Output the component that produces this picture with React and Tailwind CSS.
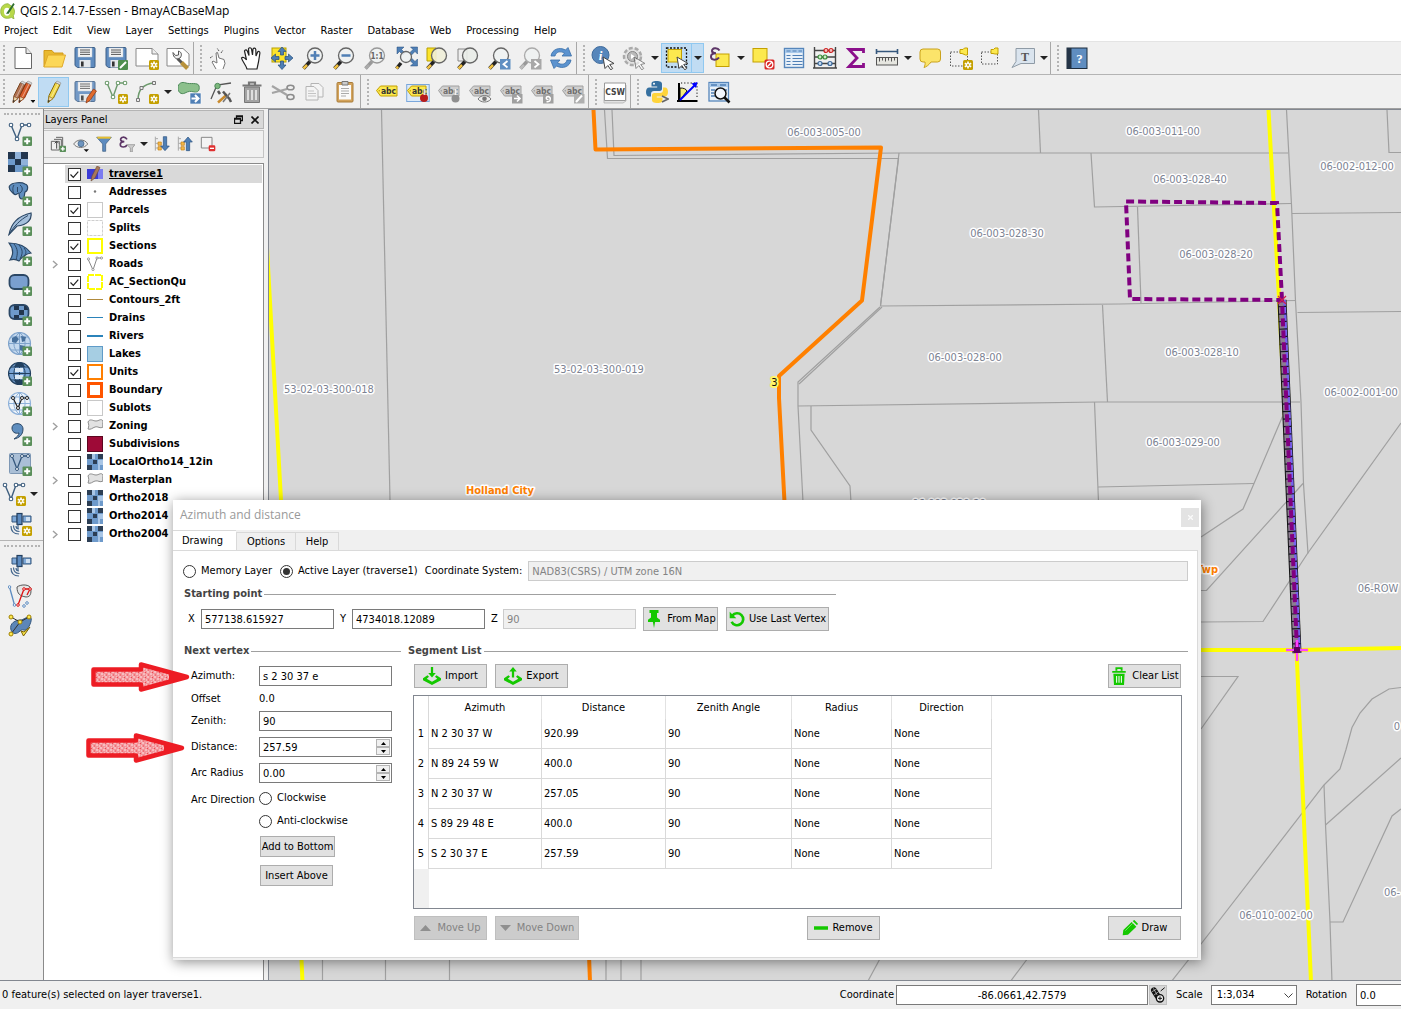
import React from "react";

/* ---------- icon primitives ---------- */

const Ico = ({ s = 24, children }) => (
  <svg width={s} height={s} viewBox="0 0 24 24" fill="none" className="shrink-0" aria-hidden="true">
    {children}
  </svg>
);

const Plus = () => (
  <g>
    <rect x="14.5" y="14.5" width="9.5" height="9.5" rx="1" fill="#5a8f5a" />
    <path d="M19.2 16.2v6M16.2 19.2h6" stroke="#fff" strokeWidth="2" />
  </g>
);
const Star = () => (
  <g>
    <rect x="14" y="14" width="10" height="10" rx="1.5" fill="#c4a000" />
    <path d="M19 15.5v7M15.8 17.2l6.4 3.6M15.8 20.8l6.4-3.6" stroke="#fff" strokeWidth="1.7" />
    <circle cx="19" cy="19" r="1" fill="#c4a000" />
  </g>
);
const Cursor = ({ o = 1 }) => (
  <path d="M12 11l11 6.5-4.3 1 3 4-2 1.3-2.800-4.300-2.900 3z" fill="#fff" stroke="#444" strokeWidth="1" opacity={o} />
);
const Lens = ({ cx = 14, cy = 9.500, r = 7.500, fill = "#eef2f2", handle = "#f0c040", stroke = "#666", children }) => (
  <g>
    <path d={`M${cx - 5} ${cy + 6}L2.500 22.500`} stroke={handle === "#f0c040" ? "#222" : "#999"} strokeWidth="3.500" />
    <path d={`M${cx - 8} ${cy + 9.500}L2.500 22.500`} stroke={handle} strokeWidth="2.500" />
    <circle cx={cx} cy={cy} r={r} fill={fill} fillOpacity=".9" stroke={stroke} strokeWidth="1.300" />
    {children}
  </g>
);
const Floppy = () => (
  <g>
    <path d="M3 1.500h18a1 1 0 011 1v18a1 1 0 01-1 1H4.500L2 19.500v-17a1 1 0 011-1z" fill="#5e8bbf" stroke="#3d5f87" />
    <rect x="5" y="2" width="14" height="9" fill="#f4f4f4" stroke="#c4ccd6" strokeWidth=".5" />
    <path d="M7 4h10M7 6.200h10M7 8.400h10" stroke="#555" />
    <rect x="6.500" y="14" width="11" height="7.500" fill="#e4e7ea" />
    <rect x="8" y="15.500" width="2.600" height="5" fill="#333" />
  </g>
);
const Tag = ({ c = "#fce94f", b = "#c4a000", t = "#333", w = 21 }) => (
  <g>
    <path d={`M1.500 10.500L5.500 6H${w + 1}v10H5.500z`} fill={c} stroke={b} strokeLinejoin="round" />
    <circle cx="4.300" cy="10.800" r=".8" fill={b} />
    <text x="13.500" y="14" fontSize="8.500" fontWeight="bold" textAnchor="middle" fill={t} fontFamily="DejaVu Sans Condensed, sans-serif">abc</text>
  </g>
);
const GTag = () => <Tag c="#cfcfcf" b="#a0a0a0" t="#6e6e6e" />;
const PencilShape = ({ c = "#f0d848", d = "#8a6d10", x = 0 }) => (
  <g transform={`translate(${x} 0)`}>
    <path d="M5 22.500l1-7L12.500 2.500 17 4.700 10.500 18z" fill={c} stroke={d} />
    <path d="M12.500 2.500L14 1l4 2-1 1.700z" fill="#ddd" stroke="#888" strokeWidth=".6" />
    <path d="M5 22.500l1-6 4 2z" fill="#ead7ae" stroke={d} strokeWidth=".6" />
    <path d="M5 22.500l.4-2.500 1.600.8z" fill="#222" />
    <path d="M8.500 17L15 4" stroke="#fff" strokeOpacity=".45" />
  </g>
);
const Vee = ({ c = "#3f5f7f", w = 1.400 }) => (
  <g stroke={c} strokeWidth={w}>
    <path d="M3 3l6 14 5-14h7" />
    <g fill="#fff" strokeWidth="1.100">
      <circle cx="3" cy="3" r="1.800" /><circle cx="9" cy="17" r="1.800" /><circle cx="14" cy="3" r="1.800" /><circle cx="21" cy="3" r="1.800" />
    </g>
  </g>
);
const Raster = () => (
  <g>
    <rect x="0" y="0" width="20" height="20" fill="#6e9acb" />
    <path d="M0 0h7v7H0zM13 0h7v7h-7zM7 7h6v6H7zM0 13h7v7H0z" fill="#22364e" />
    <path d="M7 0h6v7H7zM13 7h7v6h-7z" fill="#8fb2da" />
  </g>
);
const Satellite = ({ children }) => (
  <g>
    <path d="M4 4h5v6H4zM15 4h8v6h-8z" fill="#7fa9d8" stroke="#35577c" />
    <rect x="18" y="5" width="4" height="4" fill="#cfe0f2" />
    <rect x="9" y="1.500" width="5" height="11" fill="#5c8bc0" stroke="#233f5f" strokeWidth="1.200" />
    <path d="M10 12.500v4M3 14c0 5 3 8 8 8M5.500 13.500c0 4 2 6 6 6M8 14c0 2 1 3 3 3" stroke="#45688e" strokeWidth="1.200" />
    {children}
  </g>
);
const Globe = ({ fill, line, children }) => (
  <g>
    <circle cx="11.500" cy="11.500" r="11" fill={fill} stroke={line} strokeWidth="1.200" />
    <path d="M.5 11.500h22M11.500.5v22M3 5h17M3 18h17M11.500.5c-7.500 6-7.500 16 0 22M11.500.5c7.500 6 7.500 16 0 22" stroke={line} />
    {children}
  </g>
);

/* ---------- toolbars ---------- */

const Caret = () => (
  <svg width="8" height="4" viewBox="0 0 8 4" aria-hidden="true"><path d="M0 0h8L4 4z" fill="#222" /></svg>
);
const Btn = ({ label, on, children }) => (
  <button
    aria-label={label}
    className={`flex h-[30px] w-[31px] items-center justify-center ${on ? "border border-[#90c8f0] bg-[#c0dcf3]" : ""}`}
  >
    <Ico>{children}</Ico>
  </button>
);
const Drop = ({ label, on }) => (
  <button
    aria-label={label}
    className={`flex h-[30px] w-3 items-center justify-center ${on ? "border border-l-0 border-[#90c8f0] bg-[#c0dcf3]" : ""}`}
  >
    <Caret />
  </button>
);
const Grip = ({ first }) => (
  <span className={`flex h-[26px] w-[7px] justify-center ${first ? "" : "ml-[3px]"}`}>
    <span className="h-full border-l-2 border-dotted border-[#b4b4b4]" />
  </span>
);
const Group = ({ first, last, label, children }) => (
  <div role="toolbar" aria-label={label} className={`flex h-full items-center ${last ? "" : "border-r border-[#a8a8a8]"}`}>
    <Grip first={first} />
    {children}
  </div>
);

const FileTools = () => (
  <Group first label="File">
    <Btn label="New project"><path d="M4 1.500h11l5.500 6v15H4z" fill="#fff" stroke="#666" /><path d="M15 1.500v6h5.500" fill="#e8e8e8" stroke="#666" /></Btn>
    <Btn label="Open project"><path d="M2 21V4.500h8l2 2.500h9v4" fill="#e9b92f" stroke="#d29a1a" /><path d="M2 21L6 9h17.500L20 21z" fill="#fcd757" stroke="#e0a92a" /></Btn>
    <Btn label="Save project"><Floppy /></Btn>
    <Btn label="Save project as"><Floppy /><rect x="14" y="14" width="10" height="10" rx="1" fill="#4f8f4f" /><path d="M16 22l6-6" stroke="#fff" strokeWidth="2" /></Btn>
    <Btn label="New composer"><path d="M1 2.500h16l6 5.500v12H1z" fill="#fff" stroke="#888" /><path d="M17 2.500V8h6" fill="#eee" stroke="#888" /><Star /></Btn>
    <Btn label="Composer manager"><path d="M1 2.500h16l6 5.500v12H1z" fill="#fff" stroke="#888" /><path d="M11.500 12.500L16 17" stroke="#555" strokeWidth="3" /><path d="M7 6.500l2.500 3 3-.5V5c3 1 4 4 1.500 7-3 2-7 0-7-5.500z" fill="#eee" stroke="#555" /><path d="M15.500 16.500l6 6" stroke="#b8923c" strokeWidth="4" /></Btn>
  </Group>
);

const NavTools = () => (
  <Group label="Map navigation">
    <Btn label="Touch zoom and pan"><path d="M8 23l-4-7 1-1 4 2-1-10 1.500-.5L11 12l5 1.500 1 4-2 5.500" fill="#fff" stroke="#777" /><path d="M11 5L9 2M2 12l3-2M13 7l2-3" stroke="#555" strokeDasharray="2 1" /></Btn>
    <Btn label="Pan map"><path d="M8 23C7 19 3 15 2.500 12c1-1.500 3-.5 5 2L5.500 5c.5-1.500 2-1.500 2.800 0L10 9.500 9.500 2.800c.7-1.600 2.500-1.300 3 .2L13.500 9 14 3c.8-1.300 2.500-1 2.800.5L17 10l1.600-4c1-1 2.300-.5 2.300 1L19.500 16 18 23z" fill="#fff" stroke="#222" strokeWidth="1.200" /></Btn>
    <Btn label="Pan to selection"><rect x="2" y="2" width="14" height="14" fill="#fce42c" stroke="#b8a000" /><g fill="#4f7fb5" stroke="#274f7c" strokeWidth=".7"><path d="M12 1l4 4.500h-2.500V9h-3V5.500H8zM12 23.500L8 19h2.500v-4h3v4H16zM1 12l4.500-4v2.500H9v3H5.500V16zM23 12l-4.500-4v2.500H15v3h3.500V16z" /></g></Btn>
    <Btn label="Zoom in"><Lens><path d="M14 5v9M9.500 9.500h9" stroke="#4f7fb5" strokeWidth="2.500" /></Lens></Btn>
    <Btn label="Zoom out"><Lens><path d="M9.500 9.500h9" stroke="#4f7fb5" strokeWidth="2.500" /></Lens></Btn>
    <Btn label="Zoom to native resolution"><Lens handle="#aaa" stroke="#999"><text x="14" y="12.500" fontSize="8" fontWeight="bold" textAnchor="middle" fill="#666" fontFamily="DejaVu Sans Condensed, sans-serif">1:1</text></Lens></Btn>
    <Btn label="Zoom full"><g fill="#4f7fb5" stroke="#274f7c" strokeWidth=".5"><path d="M3 1h7L7.500 3.500 11 7 9 9 5.500 5.500 3 8zM23.500 1v7L21 5.500 17.500 9l-2-2L19 3.500 16.500 1zM23.500 20h-7l2.500-2.500-3-3 2-2 3 3 2.500-2.500z" /></g><Lens cx={12} cy={11} r={5.500} /></Btn>
    <Btn label="Zoom to selection"><path d="M2 2h9v13H2z" fill="#fce42c" stroke="#b8a000" /><Lens fill="#efeed8" /></Btn>
    <Btn label="Zoom to layer"><path d="M2 3h9v12H2z" fill="#eee" stroke="#888" /><Lens fill="#e9ece8" /></Btn>
    <Btn label="Zoom last"><Lens /><rect x="13" y="13" width="10.500" height="10.500" fill="#5f8fc2" /><path d="M20.500 15l-4 3.200 4 3.300" stroke="#fff" strokeWidth="1.800" /></Btn>
    <Btn label="Zoom next"><Lens handle="#bbb" stroke="#aaa" /><rect x="13" y="13" width="10.500" height="10.500" fill="#a8a8a8" /><path d="M16.500 15l4 3.200-4 3.300" stroke="#fff" strokeWidth="1.800" /></Btn>
    <Btn label="Refresh"><path d="M2 10C3 3.500 10 .5 16.500 4L19 1.500 22.500 10H13l2.500-2.800C11 4.500 7 6 6 10z" fill="#5c93cf" stroke="#3a6ea8" strokeWidth=".8" /><path d="M22 14c-1 6.500-8 9.500-14.500 6L5 22.500 1.500 14H11l-2.500 2.800C13 19.500 17 18 18 14z" fill="#5c93cf" stroke="#3a6ea8" strokeWidth=".8" /></Btn>
  </Group>
);

const AttrTools = () => (
  <Group label="Attributes">
    <Btn label="Identify features"><circle cx="9.500" cy="9" r="8.500" fill="#5686bb" stroke="#3f6b9c" /><text x="9.500" y="13.500" fontSize="13" fontWeight="bold" fontStyle="italic" textAnchor="middle" fill="#fff" fontFamily="Liberation Serif, serif">i</text><Cursor /></Btn>
    <Btn label="Run feature action"><circle cx="10.500" cy="10.500" r="8.500" fill="#e2e2e2" stroke="#aaa" strokeWidth="2.500" strokeDasharray="4 2" /><circle cx="10.500" cy="10.500" r="5" fill="#bbb" stroke="#888" /><path d="M9 8v5l4-2.500z" fill="#fff" /><Cursor o={0.6} /></Btn>
    <Drop label="Feature action options" />
    <Btn label="Select features" on><rect x="1.500" y="2" width="20" height="19" stroke="#111" strokeDasharray="2 1.500" strokeWidth="1.300" /><rect x="3" y="3.500" width="13.500" height="12.500" fill="#fce94f" stroke="#c4a000" /><Cursor /></Btn>
    <Drop label="Selection options" on />
    <Btn label="Select by expression"><rect x="8" y="8" width="13" height="12.500" fill="#fce94f" stroke="#c4a000" /><path d="M11.500 4.500C9.500 1 3.500 2 4 5c.2 1.500 2 2.300 4 2.300-3 0-5.300 1-5 3.700.3 3.500 6 3.500 8 .5" stroke="#5c3566" strokeWidth="2" /></Btn>
    <Drop label="Expression options" />
    <Btn label="Deselect features"><rect x="2" y="2.500" width="14" height="13.500" fill="#fce94f" stroke="#c4a000" /><rect x="13.500" y="13.500" width="10" height="10" rx="1.500" fill="#d92626" /><circle cx="18.500" cy="18.500" r="3.300" stroke="#fff" strokeWidth="1.300" /><path d="M16.300 20.800l4.500-4.500" stroke="#fff" strokeWidth="1.300" /></Btn>
    <Btn label="Open attribute table"><rect x="2.500" y="2.500" width="19" height="19" fill="#e9f1f9" stroke="#5686bb" strokeWidth="1.400" /><path d="M3 3h18v4H3z" fill="#a9c9ea" /><path d="M4.500 5h4M10.500 5h4M16.500 5h3.500M4.500 9.500h4M10.500 9.500h10M4.500 12.500h4M10.500 12.500h10M4.500 15.500h4M10.500 15.500h10M4.500 18.500h4M10.500 18.500h10" stroke="#4f7fb5" /></Btn>
    <Btn label="Field calculator"><path d="M1.500 1v21.500M22.500 1v21.500M1.500 4.500h21M1.500 11h21M1.500 17.500h21M0 22h24" stroke="#444" strokeWidth="1.400" /><g strokeWidth="1.200"><circle cx="13" cy="4.500" r="2" fill="#f5bcbc" stroke="#c22" /><circle cx="18" cy="4.500" r="2" fill="#f5bcbc" stroke="#c22" /><circle cx="7" cy="11" r="2" fill="#cfecc8" stroke="#3a8a3a" /><circle cx="12" cy="11" r="2" fill="#cfecc8" stroke="#3a8a3a" /><circle cx="7" cy="17.500" r="2" fill="#c9def2" stroke="#3d6a9c" /><circle cx="17" cy="17.500" r="2" fill="#c9def2" stroke="#3d6a9c" /></g></Btn>
    <Btn label="Statistical summary"><path d="M19.500 7V3.500H5l8 8.500-8 8.500h14.500V17" stroke="#8b0f8b" strokeWidth="2.800" /></Btn>
    <Btn label="Measure line"><path d="M1.500 3v5M22.500 3v5M1.500 5.500h21" stroke="#35577c" strokeWidth="1.600" /><rect x="1.500" y="11.500" width="21" height="7.500" fill="#e6e6e0" stroke="#555" /><path d="M4.500 12v3.500M7.500 12v2.500M10.500 12v3.500M13.500 12v2.500M16.500 12v3.500M19.500 12v2.500" stroke="#555" /></Btn>
    <Drop label="Measure options" />
    <Btn label="Map tips"><path d="M5 3h14.500a3 3 0 013 3v7a3 3 0 01-3 3H13c-2 3-5 5-7 5.500 1-2 1.300-3.500 1-5.500H5a3 3 0 01-3-3V6a3 3 0 013-3z" fill="#fbe46a" stroke="#caa21c" /></Btn>
    <Btn label="New bookmark"><rect x="1.500" y="6" width="17" height="14" stroke="#555" strokeDasharray="1.500 1.500" /><path d="M11 3.500h3L15.500 2h3v7h-2L13 7.500h-2z" fill="#fce94f" stroke="#c4a000" /><Star /></Btn>
    <Btn label="Show bookmarks"><rect x="1.500" y="6" width="16" height="12" stroke="#555" strokeDasharray="1.500 1.500" /><path d="M11 3.500h2.500L15 2h3v6h-3L13 7.500h-2z" fill="#fce94f" stroke="#c4a000" /></Btn>
    <Btn label="Text annotation"><path d="M5 2.500h18.500v15H10L1 21.500l4-6z" fill="#dae4ee" stroke="#8f9ba6" /><text x="14" y="14.500" fontSize="12" fontWeight="bold" textAnchor="middle" fill="#555" fontFamily="Liberation Serif, serif">T</text></Btn>
    <Drop label="Annotation options" />
  </Group>
);

const HelpTools = () => (
  <Group last label="Help">
    <Btn label="Help contents"><rect x="2" y="2" width="20" height="20.500" fill="#5f8dc0" stroke="#1d2c3d" /><path d="M2 2h4.500v20.500H2z" fill="#243447" /><text x="14.500" y="17" fontSize="13" fontWeight="bold" textAnchor="middle" fill="#fff" fontFamily="Liberation Serif, serif">?</text></Btn>
  </Group>
);

const Hammer = () => (
  <g><path d="M9 22.500l9-8" stroke="#c98a2c" strokeWidth="2.500" /><path d="M14 11.500l6 7M20 18l2 4M11 14l-2-3" stroke="#555" strokeWidth="2.500" /><path d="M14 22l7-9" stroke="#777" strokeWidth="1.500" /></g>
);

const EditTools = () => (
  <Group first label="Digitizing">
    <Btn label="Current edits"><PencilShape c="#b07050" d="#7a4520" x={-3} /><PencilShape c="#d85c2a" d="#8a3510" x={3} /><path d="M19.500 20h5l-2.500 3z" fill="#111" /></Btn>
    <Btn label="Toggle editing" on><PencilShape x={1} /></Btn>
    <Btn label="Save layer edits"><g opacity=".85"><Floppy /></g><path d="M13 23l1-5 6.500-9 3 2-6.500 9.500z" fill="#e06a2c" stroke="#8a3510" strokeWidth=".7" /></Btn>
    <Btn label="Add feature"><Vee c="#6c9a6c" /><Star /></Btn>
    <Btn label="Add circular string"><path d="M3 20C3 10 8 4 19 3" stroke="#6c9a6c" strokeWidth="1.500" /><g fill="#eee" stroke="#777"><path d="M1.500 18.500h3v3h-3zM5 6.500h3v3H5zM17.500 1.500h3v3h-3z" /></g><Star /></Btn>
    <Drop label="Curve options" />
    <Btn label="Move feature"><path d="M0 8c0-5 4-6.500 8-5s12-1 13 3-1 7-5 6-5-1-9 1-7-1-7-5z" fill="#8cc08c" stroke="#4e8a5a" /><rect x="12" y="13" width="11" height="11" fill="#4f7fb5" stroke="#fff" strokeWidth=".6" /><path d="M13.500 18.500h6M17 15l3.500 3.500L17 22" stroke="#fff" strokeWidth="2" /></Btn>
    <Btn label="Node tool"><path d="M2 19L8 5l14-2" stroke="#555" strokeWidth="1.300" /><circle cx="8.500" cy="6" r="2.700" fill="#7db87d" stroke="#4e8a5a" /><Hammer /></Btn>
    <Btn label="Delete selected"><path d="M4.500 7h15v15.500h-15z" fill="#a3a3a3" stroke="#777" /><path d="M2.500 5.500h19M9 5V2.500h6V5" stroke="#777" strokeWidth="2.200" /><path d="M8 10v10M12 10v10M16 10v10" stroke="#e6e6e6" strokeWidth="1.800" /></Btn>
    <Btn label="Cut features"><path d="M1 6l15 9M1 13l15-4" stroke="#a4a4a4" strokeWidth="2.200" /><ellipse cx="19.500" cy="7.500" rx="3.500" ry="2.300" stroke="#8c8c8c" strokeWidth="1.600" /><ellipse cx="19.500" cy="17" rx="3.500" ry="2.500" stroke="#8c8c8c" strokeWidth="1.600" /></Btn>
    <Btn label="Copy features"><path d="M9 3.500h8l4 4V17H9z" fill="#f4f4f4" stroke="#b4b4b4" /><path d="M4 6.500h8l4 4V20H4z" fill="#f4f4f4" stroke="#b4b4b4" /><path d="M6 11h6M6 13.500h8M6 16h8" stroke="#c4c4c4" /></Btn>
    <Btn label="Paste features"><rect x="4" y="2.500" width="16" height="19.500" rx="1" fill="#d3a35c" stroke="#a97c38" /><path d="M6 5h12v14.500H6z" fill="#fafafa" /><path d="M9 1.500h6v3.500H9z" fill="#ccc" stroke="#777" /><path d="M8 8.500h8M8 11h8M8 13.500h8M8 16h5" stroke="#aaa" /></Btn>
  </Group>
);

const LabelTools = () => (
  <Group label="Labels">
    <Btn label="Layer labeling options"><Tag /></Btn>
    <Btn label="Highlight pinned labels"><rect x=".7" y="4.500" width="22.500" height="17" fill="#dceaf8" stroke="#7aa7dc" /><Tag w={19} /><circle cx="18" cy="18" r="4" fill="#b81c1c" /><path d="M18.500 9v6" stroke="#ddd" strokeWidth="2" /></Btn>
    <Btn label="Pin or unpin labels"><GTag /><circle cx="18.500" cy="18.500" r="4" fill="#8f8f8f" /><path d="M18.500 9v6" stroke="#f0f0f0" strokeWidth="2" /></Btn>
    <Btn label="Show or hide labels"><GTag /><path d="M10 19c3-4.500 10-4.500 13 0-3 4-10 4-13 0z" fill="#eee" stroke="#777" /><circle cx="16.500" cy="18.800" r="2.300" fill="#777" /></Btn>
    <Btn label="Move label"><GTag /><rect x="13" y="14" width="10.500" height="9.500" fill="#a0a0a0" /><path d="M15 18.500h5M18 15.500l3 3-3 3" stroke="#fff" strokeWidth="1.600" /></Btn>
    <Btn label="Rotate label"><GTag /><rect x="13" y="14" width="10.500" height="9.500" fill="#a0a0a0" /><path d="M16.500 21.500c4 1.500 5-4 2-5-3 0-3 3.500 0 3" stroke="#fff" strokeWidth="1.400" /></Btn>
    <Btn label="Change label"><GTag /><rect x="13" y="14" width="10.500" height="9.500" fill="#b0b0b0" /><path d="M15 22l6-6.500" stroke="#fff" strokeWidth="2" /></Btn>
  </Group>
);

const PluginTools = () => (
  <>
    <Group label="Metadata search">
      <Btn label="Metadata search"><path d="M4 5h19v16l-3 2H1V8z" fill="#e2e2e2" stroke="#aaa" strokeWidth=".7" /><path d="M1.500 3h21v17.500h-21z" fill="#fff" stroke="#999" /><text x="12" y="14.500" fontSize="8.500" fontWeight="bold" textAnchor="middle" fill="#444" fontFamily="DejaVu Sans Condensed, sans-serif">CSW</text></Btn>
    </Group>
    <Group last label="Plugins">
      <Btn label="Python console"><path d="M11.500 1c-4 0-5 1-5 3v2.500h5.700v1H4.500C2 7.500 1 9.500 1 12s1 4.500 3 4.500h2V14c0-2 1-3 3-3h5.500c2 0 2.500-1 2.500-2.500V4c0-2-1.500-3-5.500-3z" fill="#3670a0" /><circle cx="9" cy="3.700" r="1" fill="#fff" /><path d="M12.500 23c4 0 5-1 5-3v-2.500h-5.700v-1h7.700c2.500 0 3.500-2 3.500-4.500S22 7.500 20 7.500h-2V10c0 2-1 3-3 3H9.500c-2 0-2.500 1-2.500 2.500V20c0 2 1.500 3 5.500 3z" fill="#ffd43b" /><path d="M17 16l6 3-6 3" stroke="#666" strokeWidth="1.600" /></Btn>
      <Btn label="Azimuth and distance"><path d="M4 20V8c4 0 6 1 7 3z" fill="#f4ef7a" stroke="#111" /><path d="M3 3v19M1 21h20.500" stroke="#000" strokeWidth="2" /><path d="M5 3h16v15" stroke="#111" strokeDasharray="1.200 2" /><path d="M4 20L19 5" stroke="#00f" strokeWidth="2" /><path d="M21.500 2l-1.500 6-4.500-4.500z" fill="#00f" /></Btn>
      <Btn label="Attribute search"><rect x="2" y="2.500" width="19.500" height="18.500" fill="#e9f1f9" stroke="#5686bb" strokeWidth="1.300" /><path d="M2.500 3h18.500v4H2.500z" fill="#a9c9ea" /><path d="M4 5h6M13 5h6M4 10h4M4 13h3M4 16h4M17 10h3" stroke="#4f7fb5" strokeWidth="1.300" /><circle cx="13.500" cy="13.500" r="5.500" fill="#f4f8fc" fillOpacity=".8" stroke="#111" strokeWidth="1.500" /><path d="M17.500 17.500l5 5" stroke="#111" strokeWidth="2.600" /></Btn>
    </Group>
  </>
);

/* ---------- left tool strip ---------- */

const sideTop = [
  ["Add vector layer", <><Vee /><Plus /></>],
  ["Add raster layer", <><Raster /><Plus /></>],
  ["Add PostGIS layer", <><path d="M1.500 4C4 0 14 0 17 2c4 1 3 7 0 8-1 3 0 7-3 7s-3-3-3-6c-2 0-3 3-5 1S0 8 1.500 4z" fill="#5f8ebf" stroke="#2b4765" strokeWidth="1.200" /><path d="M6 3c-2 3-1 7 0 9M12 3c3 2 3 6 0 8M9.500 5v5" stroke="#2b4765" /><Plus /></>],
  ["Add SpatiaLite layer", <><path d="M1 22.500C3 12 9 4 23 1c1 6-3 12-14 13z" fill="#a4bfdb" stroke="#2b4765" strokeWidth="1.200" /><path d="M1 22.500C6 14 12 8 20 3.500" stroke="#2b4765" /><Plus /></>],
  ["Add MSSQL layer", <><path d="M1 1c8 0 16 2 22 10-6 1-9 4-12 8-3-2-6-2-9-1 4-6 3-12-1-17z" fill="#5f8ebf" stroke="#2b4765" strokeWidth="1.200" /><path d="M6 2c4 5 4 9 2 16M11 3c4 5 4 8 1 14M16 6c3 4 2 5 0 9" stroke="#2b4765" /><Plus /></>],
  ["Add Oracle layer", <><rect x="1.500" y="3" width="19" height="14" rx="5" fill="#7a9fd0" stroke="#2b4765" strokeWidth="1.800" /><Plus /></>],
  ["Add Oracle raster layer", <><rect x="1.500" y="3" width="19" height="14" rx="5" fill="#6e9acb" stroke="#2b4765" strokeWidth="1.800" /><path d="M6 4h5v4H6zM11 8h5v5h-5zM6 13h5v3.500H6zM16 4h2l2 3v1h-4z" fill="#22364e" /><Plus /></>],
  ["Add WMS layer", <><Globe fill="#c3d8ee" line="#7fa3cb" /><path d="M4 6l4-2 3 3-3 4-4-1zM13 4l5 1-1 4-3 1zM12 13l5 1-2 5-3-1z" fill="#47709c" /><Plus /></>],
  ["Add WCS layer", <><Globe fill="#7aa5d6" line="#22405f" /><path d="M6 5h11L15 1H8zM6 18h11l-2 4H8z" fill="#22405f" /><path d="M7 6h8v4H7zM7 13h8v4H7z" fill="#dbe8f5" /><Plus /></>],
  ["Add WFS layer", <><Globe fill="#eef4fa" line="#8fb2da" /><path d="M5 6l5 10 4-10h5" stroke="#222" strokeWidth="1.200" /><g fill="#fff" stroke="#222"><circle cx="5" cy="6" r="1.500" /><circle cx="10" cy="16" r="1.500" /><circle cx="14" cy="6" r="1.500" /><circle cx="19" cy="6" r="1.500" /></g><Plus /></>],
  ["Add delimited text layer", <><path d="M4 6c0-6 11-6 11 1 0 6-4 9-9 10 3-2 5-4 5-6-4 1-7-1-7-5z" fill="#5f8ebf" stroke="#2b4765" /><Plus /></>],
  ["Add virtual layer", <><rect x="1.500" y="1.500" width="21" height="20" rx="1" fill="#aabfd6" stroke="#7d97b4" /><path d="M4 4l5 13 5-13h6" stroke="#35577c" strokeWidth="1.300" /><g fill="#fff" stroke="#35577c"><circle cx="4" cy="4" r="1.500" /><circle cx="9" cy="17" r="1.500" /><circle cx="14" cy="4" r="1.500" /><circle cx="20" cy="4" r="1.500" /></g><Plus /></>],
];

const SideBtn = ({ label, children }) => (
  <button aria-label={label} className="flex h-[30px] w-10 items-center justify-center"><Ico>{children}</Ico></button>
);
const SideGrip = () => <span className="mx-1 mt-1 h-[2px] w-[36px] border-t-2 border-dotted border-[#b4b4b4]" />;

const SideStrip = () => (
  <div role="toolbar" aria-label="Manage layers" className="flex w-[44px] shrink-0 flex-col overflow-hidden border-r border-[#8a8a8a] bg-[#f0f0f0]">
    <SideGrip />
    <div className="mt-1 flex flex-col">
      {sideTop.map(([l, g]) => <SideBtn key={l} label={l}>{g}</SideBtn>)}
      <div className="flex h-[30px] items-center gap-1 pl-[2px]">
        <button aria-label="New vector layer"><Ico><Vee /><Star /></Ico></button>
        <button aria-label="New layer options"><Caret /></button>
      </div>
      <SideBtn label="New GPX layer"><Satellite><Star /></Satellite></SideBtn>
    </div>
    <div className="mt-px border-t border-[#b4b4b4]" />
    <SideGrip />
    <div className="mt-1 flex flex-col">
      <SideBtn label="GPS tools"><Satellite /></SideBtn>
      <SideBtn label="Topology overlay">
        <path d="M1.500 3l5 18" stroke="#5c8bc0" strokeWidth="1.300" /><path d="M9 3c4-3 13-3 14 2 0 4 0 8-5 8-6-1-9-3-9-10z" fill="#e6e6e6" stroke="#555" />
        <path d="M10 21l6-16h6l-3 6" stroke="#d11" strokeWidth="1.300" /><g fill="#fff" stroke="#d11"><circle cx="10" cy="21" r="1.300" /><circle cx="16" cy="5" r="1.300" /><circle cx="22" cy="5" r="1.300" /></g>
        <g fill="#fff" stroke="#5c8bc0"><circle cx="1.500" cy="3" r="1.300" /><circle cx="6.500" cy="21" r="1.300" /><circle cx="19" cy="19" r="1.300" /><circle cx="16" cy="22" r="1.300" /></g>
      </SideBtn>
      <SideBtn label="Topology checker">
        <path d="M3 16C1 9 8 6 12 6s7-4 10-3 0 9-3 12-4-1-7 2-7 4-9-1z" fill="#5c86b8" stroke="#35577c" /><path d="M3 3l9 5 9-5M12 8L3 20" stroke="#333" />
        <g fill="#fce94f" stroke="#a08000"><circle cx="3" cy="3" r="2" /><circle cx="12" cy="8" r="2" /><circle cx="21" cy="3" r="2" /><circle cx="3" cy="20" r="2" /></g>
        <path d="M13 17l2.500 5L22 13l-6 5z" fill="#fce94f" stroke="#7a6000" />
      </SideBtn>
    </div>
  </div>
);

/* ---------- layers panel ---------- */

const Sq = ({ fill = "#fff", stroke, w = 1, dash }) => (
  <rect x={w / 2} y={w / 2} width={16 - w} height={16 - w} fill={fill} stroke={stroke} strokeWidth={w} strokeDasharray={dash} />
);
const RasterSym = () => (
  <g><path d="M0 0h16v16H0z" fill="#6e9acb" /><path d="M0 0h5v5H0zM11 0h5v5h-5zM6 6h4v4H6zM0 11h5v5H0z" fill="#2c3e54" /><path d="M5 0h3v5H5zM11 6h5v5h-5zM11 11h2v5h-2z" fill="#a9c6e6" /></g>
);
const LineSym = ({ c, w = 1 }) => <path d={w === 1 ? "M0 7.500h16" : "M0 8h16"} stroke={c} strokeWidth={w} />;
const PolySym = () => <path d="M1 4c2-4 5-1 8-1s5-3 7 0c0 3-1 4 0 6-3 2-5-1-8 0s-4 3-7 2c1-3 1-4 0-7z" fill="#e2e2e2" stroke="#8c8c8c" />;

const layers = [
  { n: "traverse1", on: true, sel: true, s: <><path d="M0 3h16v10H0z" fill="#3a3ad6" /><path d="M11 3h5v10h-5z" fill="#7b7bf0" /><path d="M4 15l1-5L10 0l3 1.500L8 12z" fill="#a8785a" stroke="#6d4a34" strokeWidth=".6" /></> },
  { n: "Addresses", s: <circle cx="8" cy="7.500" r="1.200" fill="#777" /> },
  { n: "Parcels", on: true, s: <Sq stroke="#c8c8c8" /> },
  { n: "Splits", s: <Sq stroke="#cfcfcf" dash="3 1" /> },
  { n: "Sections", on: true, s: <Sq stroke="#ffff00" w={2} /> },
  { n: "Roads", exp: true, s: <><path d="M1 3l5 11 4-12h5" stroke="#888" fill="none" /><g fill="#fff" stroke="#888" strokeWidth=".8"><circle cx="1.500" cy="3" r="1.100" /><circle cx="6" cy="13.500" r="1.100" /><circle cx="10" cy="2" r="1.100" /><circle cx="14.500" cy="2" r="1.100" /></g></> },
  { n: "AC_SectionQu", on: true, s: <Sq stroke="#ffff00" w={2} dash="6 1" /> },
  { n: "Contours_2ft", s: <LineSym c="#b08a3c" /> },
  { n: "Drains", s: <LineSym c="#2b83ba" /> },
  { n: "Rivers", s: <LineSym c="#2b83ba" w={2} /> },
  { n: "Lakes", s: <Sq fill="#a6cee3" stroke="#5f9bc8" /> },
  { n: "Units", on: true, s: <Sq stroke="#ff7f00" w={2} /> },
  { n: "Boundary", s: <Sq stroke="#ff5500" w={3} /> },
  { n: "Sublots", s: <Sq stroke="#c8c8c8" /> },
  { n: "Zoning", exp: true, s: <PolySym /> },
  { n: "Subdivisions", s: <Sq fill="#9e0a37" stroke="#5d0620" /> },
  { n: "LocalOrtho14_12in", s: <RasterSym /> },
  { n: "Masterplan", exp: true, s: <PolySym /> },
  { n: "Ortho2018", s: <RasterSym /> },
  { n: "Ortho2014", s: <RasterSym /> },
  { n: "Ortho2004", exp: true, s: <RasterSym /> },
];

const LayerRow = ({ l }) => (
  <li className="flex h-[18px] items-center">
    <span className="flex w-[21px] justify-center">
      {l.exp && (
        <button aria-label={`Expand ${l.n}`}>
          <svg width="6" height="9" viewBox="0 0 6 9" fill="none"><path d="M1 1l4 3.500L1 8" stroke="#a0a0a0" strokeWidth="1.500" /></svg>
        </button>
      )}
    </span>
    <label className={`flex h-full flex-1 items-center pl-[3px] ${l.sel ? "bg-[#d9d9d9]" : ""}`}>
      <span className="grid">
        <input type="checkbox" defaultChecked={l.on} className="peer col-start-1 row-start-1 size-[13px] appearance-none border border-[#333] bg-white" />
        <svg className="invisible col-start-1 row-start-1 size-[13px] peer-checked:visible" viewBox="0 0 13 13" fill="none"><path d="M2.500 6.500L5.300 9.300l5-5.600" stroke="#222" strokeWidth="1.200" /></svg>
      </span>
      <svg width="16" height="16" viewBox="0 0 16 16" className="ml-[6px] shrink-0" fill="none">{l.s}</svg>
      <span className={`ml-[6px] font-bold ${l.sel ? "underline" : ""}`}>{l.n}</span>
    </label>
  </li>
);

const PBtn = ({ label, children }) => (
  <button aria-label={label} className="flex h-6 w-[23px] items-center justify-center"><Ico s={16}>{children}</Ico></button>
);
const Tree = () => <><path d="M2 1v21M2 4h4M2 11h4M2 18h4" stroke="#aaa" strokeWidth="1.500" /><path d="M6 9h5v5H6zM6 16h5v5H6z" fill="#f5b94a" stroke="#c47f10" /></>;

const LayersPanel = () => (
  <section aria-label="Layers Panel" className="flex w-[224px] shrink-0 flex-col bg-[#f0f0f0] pr-1">
    <header className="mt-px flex h-[19px] items-center border border-l-0 border-[#b4b4b4] bg-[#d9d9d9] pl-px">
      <h2 className="flex-1">Layers Panel</h2>
      <button aria-label="Float panel" className="mr-2">
        <svg width="9" height="9" viewBox="0 0 9 9" fill="none" stroke="#111"><path d="M2.500 3V1h6v4.500H6.500M2.500 1.500h6" strokeWidth="1.300" /><path d="M.5 3.500h6v5h-6zM.5 4h6" strokeWidth="1.300" /></svg>
      </button>
      <button aria-label="Close panel" className="mr-1">
        <svg width="8" height="8" viewBox="0 0 8 8" stroke="#111" strokeWidth="1.600"><path d="M.5.5l7 7M7.500.5l-7 7" /></svg>
      </button>
    </header>
    <div role="toolbar" aria-label="Layer tree" className="mt-px mb-[5px] flex h-7 items-center border border-l-0 border-[#c4c4c4] pl-[2px]">
      <PBtn label="Add group"><path d="M2 8h12v13H2zM6 5h11v13M9 2h10v13" stroke="#666" strokeWidth="1.500" /><path d="M10 19V8l-3 3M10 8l3 3" stroke="#444" strokeWidth="1.500" /><Plus /></PBtn>
      <PBtn label="Manage visibility"><path d="M1 12c5-8 17-8 21 0-5 7-16 7-21 0z" fill="#eee" stroke="#777" strokeWidth="1.500" /><circle cx="12" cy="11.500" r="4.500" fill="#6f95bf" stroke="#35577c" /><path d="M16 20h8l-4 4z" fill="#111" /></PBtn>
      <PBtn label="Filter legend"><path d="M1 2h22l-8.500 10v11H10V12z" fill="#5c8bc0" stroke="#35577c" /><path d="M2 2.500h20" stroke="#e8c030" strokeWidth="3" /></PBtn>
      <PBtn label="Filter by expression"><path d="M12 5C9 0 2 1.500 2.500 5.500 3 7.500 5 8.500 8 8.500c-4 0-6.500 1.500-6 5 .5 4 8 4 10 0" stroke="#5c3566" strokeWidth="2.600" /><path d="M12 13h12l-4 5v6h-3v-6z" fill="#ccc" stroke="#888" /></PBtn>
      <Drop label="Filter options" />
      <PBtn label="Expand all"><Tree /><path d="M14 1h5v14h4l-6.500 7L10 15h4z" fill="#4f7fb5" stroke="#274f7c" /></PBtn>
      <PBtn label="Collapse all"><Tree /><path d="M14 22h5V9h4l-6.500-7.500L10 9h4z" fill="#4f7fb5" stroke="#274f7c" /></PBtn>
      <PBtn label="Remove layer"><path d="M2 2h16v16H2z" fill="#f4f4f4" stroke="#888" strokeWidth="1.500" /><rect x="13" y="14" width="10" height="9" rx="2" fill="#e03030" /><path d="M15 18.500h6" stroke="#fff" strokeWidth="2" /></PBtn>
    </div>
    <ul className="flex-1 border-t border-r border-[#8a8a8a] bg-white pt-px pr-px">
      {layers.map((l) => <LayerRow key={l.n} l={l} />)}
    </ul>
  </section>
);

/* ---------- map ---------- */

const parcelLines = [
  "M381.500 110L390 500", "M604.500 110l3 48.500H898.500L880.500 305.500", "M612 110l2 45.500 285-2.500H1288",
  "M1038.500 110l2 43", "M899 153l-18.500 153L1120 304l176-3.500", "M880 307L798 382v24l5 96", "M882 307L799 384",
  "M798 406l302-4h200", "M811 406v24l39 56 1 16", "M1102.500 305l5 97", "M1094.500 402l4 100M1098 487l156-3.500",
  "M1091 153l3.500 54L1291 203.500", "M1137.500 207l3.500 96", "M1286.500 110l5 95 4 96 5.500 101 2.500 82 4.500 69.500", "M1387 110l2 42.500h12",
  "M1292 213.500l109-1M1297.500 312.500l103.500-1", "M1282.500 416.500L1254 483.500 1243 509l-42 28", "M1303 483.500L1206.500 590.500H1201",
  "M1401 423L1307.500 553.500 1263 621.500 1201 622", "M1201 676.500h37L1201 729", "M1401 687.500l-12 1.500-17 10-12 14-8 14.500-6 22-6 19.500-16 16L1201 944l-30 38",
  "M1324 785l1.500 40 4.500 97 2 60", "M1325.500 825L1401 758", "M1330 922h13l49-106 9-7",
  "M322.500 955v26M385.500 955v26M449.500 955v26M606 955v26M621 955v26M641 955v26M882 955l-14 26M1028 958l-18 24",
];
const parcelLabels = [
  [824, 136, "06-003-005-00"], [1163, 135, "06-003-011-00"], [1357, 170, "06-002-012-00"], [1190, 183, "06-003-028-40"],
  [1007, 237, "06-003-028-30"], [1216, 258, "06-003-028-20"], [965, 361, "06-003-028-00"], [1202, 356, "06-003-028-10"],
  [1361, 396, "06-002-001-00"], [1183, 446, "06-003-029-00"], [599, 373, "53-02-03-300-019"], [329, 393, "53-02-03-300-018"],
  [1378, 592, "06-ROW"], [1276, 919, "06-010-002-00"], [949, 507, "06-003-030-20"], [1397, 730, "0"], [1392, 896, "06-"],
];

const MapCanvas = () => (
  <div className="min-w-0 flex-1 overflow-hidden border-t border-l border-[#828790] bg-[#d7d7d7]">
    <svg className="block h-full w-full" role="img" aria-label="Parcel map" fill="none">
      <g transform="translate(-269 -110)">
        <g stroke="#a0a0a0" strokeWidth="1.200">{parcelLines.map((d) => <path key={d} d={d} />)}</g>
        <g stroke="#ffff00" strokeWidth="4">
          <path d="M1268.500 110L1279 298l17.500 352L1311 982" />
          <path d="M1195 650h102l104-2" />
          <path d="M266 230L281 500 302.500 982" />
        </g>
        <g stroke="#ff8000" strokeWidth="4" strokeLinejoin="round">
          <path d="M593.500 110l2 39.500 285.500-2L862 300.500 779 376v22l5.500 104" />
          <path d="M589 955l1 27" />
        </g>
        <path d="M1282 300L1297 653" stroke="#111" strokeWidth="9" />
        <path d="M1282 300L1297 653" stroke="#8d7d92" strokeWidth="7" />
        <path d="M1284.500 300L1299.500 652" stroke="#7763f2" strokeWidth="2.500" />
        <path d="M1282 306L1297 653" stroke="#151520" strokeWidth="8" strokeDasharray="1.200 6.300" />
        <path d="M1297 650L1282 300 1130 299 1126 201.500 1277 203 1282 300" stroke="#800080" strokeWidth="4" strokeDasharray="8 4" />
        <path d="M1286 296l-8 8M1278 296l8 8" stroke="#d02050" strokeWidth="1.200" />
        <path d="M1286 650h22M1297 640v21" stroke="#ff40ff" strokeWidth="2.500" />
        <path d="M1294 647h6v6h-6z" fill="#600060" />
        <g fontSize="11" textAnchor="middle" fill="#7c8292" stroke="#fff" strokeWidth="3" strokeLinejoin="round" paintOrder="stroke">
          {parcelLabels.map(([x, y, t]) => <text key={t} x={x} y={y}>{t}</text>)}
        </g>
        <g fontSize="11" fontWeight="bold" fill="#ff8000" stroke="#fff" strokeWidth="3" strokeLinejoin="round" paintOrder="stroke">
          <text x="500" y="494" textAnchor="middle">Holland City</text>
          <text x="1218" y="573" textAnchor="end">Park Twp</text>
        </g>
        <text x="774.500" y="386" fontSize="11" textAnchor="middle" fill="#111" stroke="#fff56b" strokeWidth="4" strokeLinejoin="round" paintOrder="stroke">3</text>
      </g>
    </svg>
  </div>
);

/* ---------- dialog ---------- */

const Push = ({ icon, wide = "w-[73px]", h = "h-6", disabled, children }) => (
  <button
    disabled={disabled}
    className={`flex ${h} ${wide} items-center justify-center gap-1 border whitespace-nowrap ${disabled ? "border-[#bfbfbf] bg-[#cccccc] text-[#838383]" : "border-[#adadad] bg-[#e1e1e1]"}`}
  >
    {icon}
    {children}
  </button>
);
const G = "#14c800";
const Tray = ({ up }) => (
  <Ico s={18}>
    <path d="M0 15l6-4 2 2-3 2.500 7 4 7-4-3-2.500 2-2 6 4v2.500L12 24 0 17.500z" fill={G} />
    {up ? <path d="M12 0l5 6h-3.500v8h-3V6H7z" fill={G} /> : <path d="M12 14L7 8h3.500V0h3v8H17z" fill={G} />}
  </Ico>
);
const Pin = () => <Ico s={18}><path d="M6 0h12v4h-2v6l4 3v3h-6.500L12 24l-1.500-8H4v-3l4-3V4H6z" fill={G} /></Ico>;
const Undo = () => <Ico s={16}><path d="M5 7a9 9 0 11-1 9" stroke={G} strokeWidth="4" /><path d="M1 1v10h10z" fill={G} /></Ico>;
const Bin = () => <Ico s={18}><path d="M4.500 9h15l-.8 15H5.300z" fill={G} /><path d="M3 6.500h18M8.500 5V1.500h7V5" stroke={G} strokeWidth="2.500" /><path d="M8.800 12v9M12 12v9M15.200 12v9" stroke="#e8fbe6" strokeWidth="1.500" /></Ico>;
const Minus = () => <Ico s={14}><path d="M0 9h24v6H0z" fill={G} /></Ico>;
const Pen = () => <Ico s={16}><path d="M1 23l1-8L14.500 3l7 7L9 22zM16 1.500L18.500 0 24 5.500 22.500 8z" fill={G} /><path d="M5 16l11-11" stroke="#9dee94" /></Ico>;
const Tri = ({ down }) => <svg width="11" height="6" viewBox="0 0 11 6" className="mr-[2px]"><path d={down ? "M0 0h11L5.500 6z" : "M0 6h11L5.500 0z"} fill="#8f8f8f" /></svg>;

const field = "h-5 border border-[#7a7a7a] bg-white px-[3px] leading-[18px] outline-none disabled:border-[#cccccc] disabled:bg-[#f0f0f0] disabled:text-[#838383]";

const Legend = ({ children, className = "" }) => (
  <div className={`flex h-4 items-center gap-[2px] ${className}`}>
    <h3 className="font-bold text-[#444]">{children}</h3>
    <span className="flex-1 border-t border-[#a0a0a0]" />
  </div>
);
const Radio = ({ name, label, checked }) => (
  <label className="flex items-center gap-[5px] whitespace-nowrap">
    <input type="radio" name={name} defaultChecked={checked} className="size-[13px] appearance-none rounded-full border border-[#333] bg-white bg-clip-content p-[2px] checked:bg-[#333]" />
    {label}
  </label>
);
const Spin = ({ id, value }) => (
  <div className="flex h-5 w-[133px] items-center border border-[#7a7a7a] bg-white pr-[1px]">
    <input id={id} defaultValue={value} className="h-full w-0 flex-1 px-[3px] outline-none" />
    <span className="flex flex-col">
      <button aria-label="Increase" className="flex h-2 w-[14px] items-center justify-center border border-[#b4b4b4] bg-[#f0f0f0]"><svg width="5" height="3"><path d="M0 3h5L2.500 0z" /></svg></button>
      <button aria-label="Decrease" className="flex h-2 w-[14px] items-center justify-center border border-[#b4b4b4] bg-[#f0f0f0]"><svg width="5" height="3"><path d="M0 0h5L2.500 3z" /></svg></button>
    </span>
  </div>
);

const cols = ["Azimuth", "Distance", "Zenith Angle", "Radius", "Direction"];
const rows = [
  ["N 2 30 37 W", "920.99", "90", "None", "None"],
  ["N 89 24 59 W", "400.0", "90", "None", "None"],
  ["N 2 30 37 W", "257.05", "90", "None", "None"],
  ["S 89 29 48 E", "400.0", "90", "None", "None"],
  ["S 2 30 37 E", "257.59", "90", "None", "None"],
];

const SegmentTable = () => (
  <div className="mt-[7px] flex h-[214px] flex-col border border-[#828790] bg-white">
    <table className="w-[578px] table-fixed border-separate border-spacing-0">
      <colgroup>
        <col className="w-[15px]" /><col className="w-[113px]" /><col className="w-[124px]" /><col className="w-[126px]" /><col className="w-[100px]" /><col className="w-[100px]" />
      </colgroup>
      <thead>
        <tr className="h-[23px]">
          <td className="border-r border-[#d9d9d9]" />
          {cols.map((c) => <th key={c} scope="col" className="border-r border-[#e2e2e2] p-0 font-normal">{c}</th>)}
        </tr>
      </thead>
      <tbody>
        {rows.map((r, i) => (
          <tr key={i} className="h-[30px]">
            <th scope="row" className="border-r border-[#d9d9d9] p-0 text-center font-normal">{i + 1}</th>
            {r.map((v, j) => <td key={j} className="border-r border-b border-[#d9d9d9] p-0 pl-[2px]">{v}</td>)}
          </tr>
        ))}
      </tbody>
    </table>
    <div className="w-[15px] flex-1 bg-[#f0f0f0]" />
  </div>
);

const FormRow = ({ id, label, children }) => (
  <div className="flex items-center">
    <label htmlFor={id} className="w-[68px] whitespace-nowrap">{label}</label>
    {children}
  </div>
);

const NextVertex = () => (
  <section className="w-[217px] shrink-0">
    <Legend>Next vertex</Legend>
    <div className="mt-[7px] flex flex-col gap-[6px] pl-[7px]">
      <FormRow id="az" label="Azimuth:"><input id="az" defaultValue="s 2 30 37 e" className={`${field} w-[133px]`} /></FormRow>
      <div className="flex h-[13px] items-center"><span className="w-[68px]">Offset</span><span>0.0</span></div>
      <FormRow id="zen" label="Zenith:"><input id="zen" defaultValue="90" className={`${field} w-[133px]`} /></FormRow>
      <FormRow id="dist" label="Distance:"><Spin id="dist" value="257.59" /></FormRow>
      <FormRow id="arc" label="Arc Radius"><Spin id="arc" value="0.00" /></FormRow>
      <div className="flex pt-[2px]">
        <span className="w-[68px] pt-[2px] whitespace-nowrap">Arc Direction</span>
        <div className="flex flex-col gap-[9px]">
          <Radio name="dir" label="Clockwise" />
          <Radio name="dir" label="Anti-clockwise" />
        </div>
      </div>
    </div>
    <div className="mt-2 flex flex-col gap-2 pl-[76px]">
      <Push wide="w-[75px]" h="h-[21px]">Add to Bottom</Push>
      <Push wide="w-[73px]" h="h-[21px]">Insert Above</Push>
    </div>
  </section>
);

const SegmentList = () => (
  <section className="min-w-0 flex-1">
    <Legend>Segment List</Legend>
    <div className="mt-[5px] flex gap-2 pr-[7px] pl-[6px]">
      <Push icon={<Tray />}>Import</Push>
      <Push icon={<Tray up />}>Export</Push>
      <span className="flex-1" />
      <Push icon={<Bin />}>Clear List</Push>
    </div>
    <div className="pr-[6px] pl-[5px]"><SegmentTable /></div>
    <div className="mt-[7px] flex justify-between pr-[7px] pl-[6px]">
      <div className="flex gap-2">
        <Push disabled icon={<Tri />}>Move Up</Push>
        <Push disabled wide="w-[84px]" icon={<Tri down />}>Move Down</Push>
      </div>
      <div className="flex justify-between gap-[228px]">
        <Push icon={<Minus />}>Remove</Push>
        <Push icon={<Pen />}>Draw</Push>
      </div>
    </div>
  </section>
);

const Dialog = () => (
  <div role="dialog" aria-label="Azimuth and distance" className="absolute top-[500px] right-[200px] left-[173px] flex flex-col bg-[#f0f0f0] shadow-[1px_2px_12px_rgba(0,0,0,0.45)]">
    <header className="flex h-[30px] items-center bg-white pr-[2px] pl-[7px]">
      <h1 className="flex-1 font-['Open_Sans',sans-serif] text-[12px] text-[#999]">Azimuth and distance</h1>
      <button aria-label="Close" className="mt-1 flex h-[19px] w-[18px] items-center justify-center bg-[#e3e3e3]">
        <svg width="5" height="5" viewBox="0 0 5 5" stroke="#fafafa" strokeWidth="1.300"><path d="M0 0l5 5M5 0L0 5" /></svg>
      </button>
    </header>
    <div role="tablist" className="flex h-5 items-end">
      <button role="tab" aria-selected="true" className="-mb-px h-[21px] w-[63px] border-t border-[#d9d9d9] bg-white pr-1">Drawing</button>
      <button role="tab" className="h-[18px] w-[60px] border border-b-0 border-[#d9d9d9]">Options</button>
      <button role="tab" className="h-[18px] w-[43px] border border-b-0 border-l-0 border-[#d9d9d9]">Help</button>
    </div>
    <div role="tabpanel" className="mr-[3px] mb-[2px] border-t border-r border-b border-[#dadada] bg-white pr-[9px] pb-[17px] pl-[10px]">
      <div className="mt-[10px] flex items-center">
        <Radio name="layer" label="Memory Layer" />
        <span className="ml-2"><Radio name="layer" label="Active Layer (traverse1)" checked /></span>
        <label htmlFor="crs" className="ml-[7px] whitespace-nowrap">Coordinate System:</label>
        <input id="crs" disabled defaultValue="NAD83(CSRS) / UTM zone 16N" className={`${field} ml-[6px] min-w-0 flex-1`} />
      </div>
      <Legend className="mt-[5px] w-[653px] pl-px">Starting point</Legend>
      <div className="mt-[5px] flex items-center pl-[5px]">
        <label htmlFor="px" className="w-[13px]">X</label>
        <input id="px" defaultValue="577138.615927" className={`${field} w-[133px]`} />
        <label htmlFor="py" className="ml-[6px] w-3">Y</label>
        <input id="py" defaultValue="4734018.12089" className={`${field} w-[133px]`} />
        <label htmlFor="pz" className="ml-[6px] w-3">Z</label>
        <input id="pz" disabled defaultValue="90" className={`${field} mr-[7px] w-[133px]`} />
        <Push wide="w-[75px]" icon={<Pin />}>From Map</Push>
        <span className="w-2" />
        <Push wide="w-[103px]" icon={<Undo />}>Use Last Vertex</Push>
      </div>
      <div className="mt-3 flex gap-[7px] pl-px">
        <NextVertex />
        <SegmentList />
      </div>
    </div>
  </div>
);

const RedArrow = ({ className }) => (
  <svg width="100" height="32" viewBox="0 0 100 32" className={className} aria-hidden="true">
    <defs>
      <pattern id="speckle" width="7" height="5" patternUnits="userSpaceOnUse">
        <rect width="7" height="5" fill="#f3959a" />
        <path d="M0 1h2M4 0h1M3 3h2M6 4h1" stroke="#fde3e4" />
        <path d="M5 1.500h1M1 4h1" stroke="#ee4a52" />
      </pattern>
    </defs>
    <path d="M2.500 8.500H50V3.500L96 16 50 28.500V23.500H2.500z" fill="url(#speckle)" stroke="#ed1c24" strokeWidth="4.500" strokeLinejoin="round" />
    <path d="M78 11l20 5-20 5z" fill="#ed1c24" />
  </svg>
);

/* ---------- page ---------- */

const menus = ["Project", "Edit", "View", "Layer", "Settings", "Plugins", "Vector", "Raster", "Database", "Web", "Processing", "Help"];

const StatusBar = () => (
  <footer className="flex h-[29px] items-center border-t border-[#828790] bg-[#f0f0f0] pl-[2px]">
    <p className="flex-1">0 feature(s) selected on layer traverse1.</p>
    <label htmlFor="coord" className="mr-[2px]">Coordinate</label>
    <input id="coord" defaultValue="-86.0661,42.7579" className={`${field} w-[252px] text-center`} />
    <button aria-label="Toggle extents display" className="mr-[9px] ml-px flex h-5 w-[18px] items-center justify-center border border-[#c0c0c0] bg-[#d6d6d6]">
      <Ico s={16}><path d="M6 5l5 8" stroke="#111" strokeWidth="9" strokeLinecap="round" /><path d="M3 7l7-4M6 12l7-5M5 2l7 12" stroke="#ddd" /><circle cx="15" cy="17" r="5.500" fill="#eee" stroke="#111" strokeWidth="2" /><path d="M12 17h6M15 14v6M16 6l6-5" stroke="#111" strokeWidth="1.500" /></Ico>
    </button>
    <label htmlFor="scale" className="mr-2">Scale</label>
    <span className="mr-[9px] grid w-[86px] items-center">
      <select id="scale" className={`${field} col-start-1 row-start-1 w-full appearance-none pl-[5px]`}><option>1:3,034</option></select>
      <svg width="9" height="5" viewBox="0 0 9 5" fill="none" className="pointer-events-none col-start-1 row-start-1 mr-1 justify-self-end"><path d="M.5.5l4 4 4-4" stroke="#444" /></svg>
    </span>
    <label htmlFor="rot" className="mr-[9px]">Rotation</label>
    <input id="rot" defaultValue="0.0" className="h-[22px] w-[45px] border border-r-0 border-[#7a7a7a] bg-white px-[3px]" />
  </footer>
);

export default function App() {
  return (
    <div className="relative flex h-screen min-h-[1000px] flex-col overflow-hidden bg-white pb-[14px] font-['DejaVu_Sans_Condensed','DejaVu_Sans',sans-serif] text-[11px] leading-[14px] text-black">
      <header className="flex h-[21px] items-center gap-1">
        <Ico s={16}><path d="M12 1C4 1 1 7 1 13s4 10 10 10c3 0 4-.5 6-1.500l4 2.500-1-5c3-4 2-10-1-13z" fill="#b8d84a" stroke="#7fa828" /><ellipse cx="10.500" cy="13" rx="4.500" ry="6" fill="#fff" /><path d="M9 16L20 0l2 2-9 14z" fill="#2f6f2f" /></Ico>
        <span className="font-['Open_Sans',sans-serif] text-[12px]">QGIS 2.14.7-Essen - BmayACBaseMap</span>
      </header>
      <nav className="flex h-5 items-center gap-[15px] pl-1">
        {menus.map((m) => <button key={m}>{m}</button>)}
      </nav>
      <div className="flex h-[34px] items-center border-t border-b border-t-[#e4e4e4] border-b-[#b4b4b4] bg-[#f0f0f0]">
        <FileTools /><NavTools /><AttrTools /><HelpTools />
      </div>
      <div className="flex h-[34px] items-center border-b border-[#a0a0a0] bg-[#f0f0f0]">
        <EditTools /><LabelTools /><PluginTools />
      </div>
      <main className="flex min-h-0 flex-1">
        <SideStrip />
        <LayersPanel />
        <MapCanvas />
      </main>
      <StatusBar />
      <Dialog />
      <RedArrow className="absolute top-[661px] left-[91px]" />
      <RedArrow className="absolute top-[732px] left-[86px]" />
    </div>
  );
}
